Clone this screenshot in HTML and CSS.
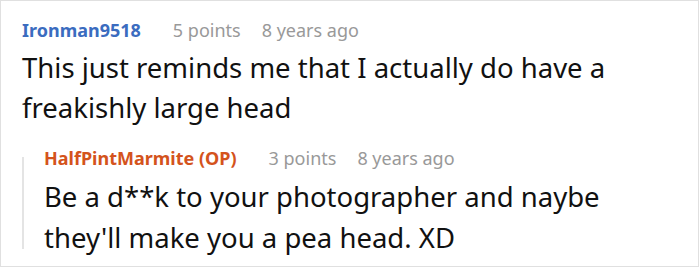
FILE: index.html
```html
<!DOCTYPE html>
<html>
<head>
<meta charset="utf-8">
<link rel="stylesheet" href="styles.css">
</head>
<body>
<div class="thread">
  <div class="comment">
    <div class="meta">
      <span class="user user-blue">Ironman9518</span>
      <span class="points">5 points</span>
      <span class="time">8 years ago</span>
    </div>
    <p class="text">This just reminds me that I actually do have a freakishly large head</p>
  </div>
  <div class="reply">
    <div class="rail"></div>
    <div class="comment">
      <div class="meta">
        <span class="user user-orange">HalfPintMarmite (OP)</span>
        <span class="points">3 points</span>
        <span class="time">8 years ago</span>
      </div>
      <p class="text text-reply">Be a d**k to your photographer and naybe they'll make you a pea head. XD</p>
    </div>
  </div>
</div>
</body>
</html>
```
FILE: styles.css
```css
html, body {
  margin: 0;
  padding: 0;
  background: #fff;
}
.thread {
  box-sizing: border-box;
  width: 699px;
  height: 267px;
  border: 1px solid #e0e0e0;
  padding: 17px 21px 0 21px;
  font-family: "Noto Sans", "Open Sans", sans-serif;
}
.meta {
  display: flex;
  align-items: baseline;
  font-size: 18px;
  line-height: 24px;
  color: #999;
}
.user {
  font-weight: 700;
  margin-right: 32px;
}
.user-blue { color: #3b6cbf; }
.user-orange { color: #d4531c; }
.points { margin-right: 21px; }
.text {
  margin: 6px 0 0 0;
  font-size: 27.5px;
  line-height: 40px;
  color: #111;
  width: 615px;
}
.text-reply {
  line-height: 41px;
}
.reply {
  display: flex;
  margin-top: 18px;
}
.rail {
  width: 2px;
  background: #e4e4e4;
  margin: 11px 20px 9px 0;
}
```
